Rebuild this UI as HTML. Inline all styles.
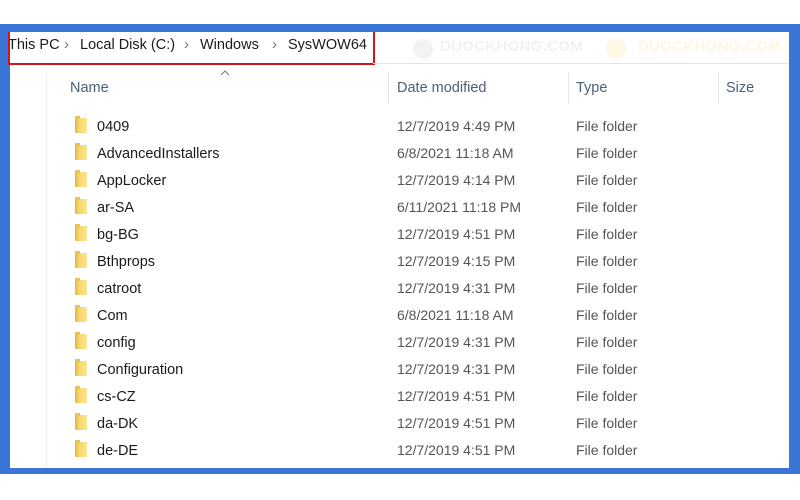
<!DOCTYPE html>
<html><head><style>
body{margin:0;width:800px;height:500px;background:#fff;position:relative;overflow:hidden;font-family:"Segoe UI","Liberation Sans",sans-serif;}
.frame{position:absolute;left:0;top:24px;width:800px;height:450px;background:#3a76d8;}
.inner{position:absolute;left:10px;top:32px;width:779px;height:436px;background:#fff;}
.t{position:absolute;font-size:14px;line-height:18px;color:#1a1a1a;white-space:nowrap;}
.g{color:#555;}
.h{color:#4c607a;font-size:14.5px;}
.red{position:absolute;left:8px;top:32px;width:363px;height:31px;border:2px solid #d2161e;border-top:none;}
.hr{position:absolute;left:373px;top:63px;width:416px;height:1px;background:#e3e3e3;}
.vl{position:absolute;width:1px;background:#e6e6e6;}
.fold{position:absolute;left:75px;width:12px;height:15px;background:linear-gradient(90deg,#e0b643 0,#f7d86a 35%,#fbe493 100%);border-radius:1px;}
.fold:before{content:"";position:absolute;left:0;top:-2px;width:5px;height:3px;background:#e8c454;}
.wm{position:absolute;font-size:15px;font-weight:bold;color:#f1f1f1;letter-spacing:0.3px;}
.ch{position:absolute;top:36px;font-size:15px;line-height:18px;color:#777;}
</style></head><body>
<div class="frame"></div>
<div class="inner"></div>
<div class="wm" style="left:440px;top:38px">DUOCKHONG.COM</div>
<div class="wm" style="left:638px;top:38px;color:#fdf6e2">DUOCKHONG.COM</div>
<div style="position:absolute;left:413px;top:39px;width:20px;height:20px;border-radius:50%;background:#f3f3f3"></div>
<div style="position:absolute;left:606px;top:39px;width:20px;height:20px;border-radius:50%;background:#fef7e3"></div>
<div class="t" style="left:8px;top:36px;font-size:14.5px">This PC</div>
<div class="ch" style="left:64px">›</div>
<div class="t" style="left:80px;top:36px;font-size:14.5px">Local Disk (C:)</div>
<div class="ch" style="left:184px">›</div>
<div class="t" style="left:200px;top:36px;font-size:14.5px">Windows</div>
<div class="ch" style="left:272px">›</div>
<div class="t" style="left:288px;top:36px;font-size:14.5px">SysWOW64</div>
<div class="red"></div>
<div class="hr"></div>
<div class="vl" style="left:46px;top:70px;height:398px;background:#f0f0f0"></div>
<div class="vl" style="left:388px;top:72px;height:32px"></div>
<div class="vl" style="left:568px;top:72px;height:32px"></div>
<div class="vl" style="left:718px;top:72px;height:32px"></div>
<svg style="position:absolute;left:220px;top:70px" width="10" height="6"><path d="M1 5L5 1L9 5" fill="none" stroke="#777" stroke-width="1"/></svg>
<div class="t h" style="left:70px;top:79px">Name</div>
<div class="t h" style="left:397px;top:79px">Date modified</div>
<div class="t h" style="left:576px;top:79px">Type</div>
<div class="t h" style="left:726px;top:79px">Size</div>
<div id="rows"></div>
<script>
var d=[["0409","12/7/2019 4:49 PM"],["AdvancedInstallers","6/8/2021 11:18 AM"],["AppLocker","12/7/2019 4:14 PM"],["ar-SA","6/11/2021 11:18 PM"],["bg-BG","12/7/2019 4:51 PM"],["Bthprops","12/7/2019 4:15 PM"],["catroot","12/7/2019 4:31 PM"],["Com","6/8/2021 11:18 AM"],["config","12/7/2019 4:31 PM"],["Configuration","12/7/2019 4:31 PM"],["cs-CZ","12/7/2019 4:51 PM"],["da-DK","12/7/2019 4:51 PM"],["de-DE","12/7/2019 4:51 PM"]];
var h="";d.forEach(function(r,i){var y=117+i*27;h+='<div class="fold" style="top:'+(y+1)+'px"></div><div class="t" style="left:97px;top:'+(y+1)+'px;font-size:14.5px">'+r[0]+'</div><div class="t g" style="left:397px;top:'+y+'px">'+r[1]+'</div><div class="t g" style="left:576px;top:'+y+'px">File folder</div>';});
document.getElementById("rows").innerHTML=h;
</script>
</body></html>
